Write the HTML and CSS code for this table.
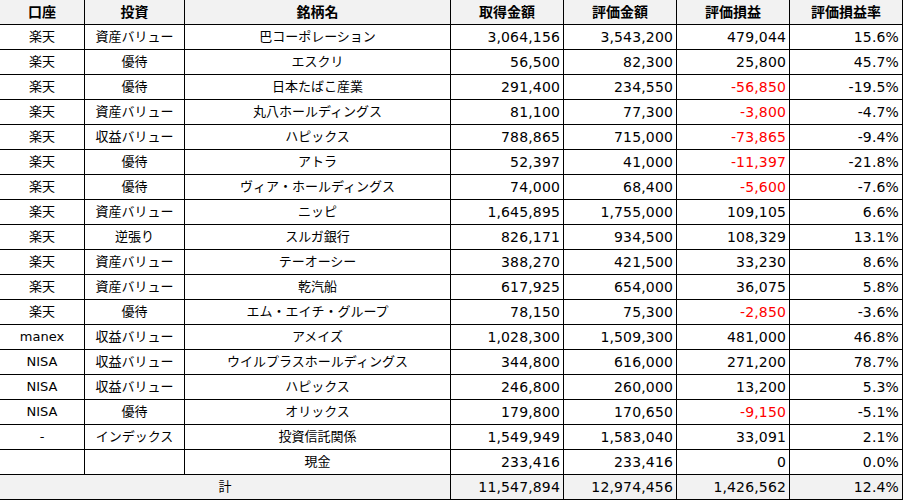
FILE: index.html
```html
<!DOCTYPE html>
<html lang="ja">
<head>
<meta charset="utf-8">
<link rel="stylesheet" href="styles.css">
</head>
<body>
<table class="sheet">
  <colgroup>
    <col class="c-acct"><col class="c-kind"><col class="c-name"><col class="c-num"><col class="c-num"><col class="c-num"><col class="c-num">
  </colgroup>
  <thead>
    <tr><th>口座</th><th>投資</th><th>銘柄名</th><th>取得金額</th><th>評価金額</th><th>評価損益</th><th>評価損益率</th></tr>
  </thead>
  <tbody>
    <tr><td class="ctr">楽天</td><td class="ctr">資産バリュー</td><td class="ctr">巴コーポレーション</td><td class="num">3,064,156</td><td class="num">3,543,200</td><td class="num">479,044</td><td class="num">15.6%</td></tr>
    <tr><td class="ctr">楽天</td><td class="ctr">優待</td><td class="ctr">エスクリ</td><td class="num">56,500</td><td class="num">82,300</td><td class="num">25,800</td><td class="num">45.7%</td></tr>
    <tr><td class="ctr">楽天</td><td class="ctr">優待</td><td class="ctr">日本たばこ産業</td><td class="num">291,400</td><td class="num">234,550</td><td class="num neg">-56,850</td><td class="num">-19.5%</td></tr>
    <tr><td class="ctr">楽天</td><td class="ctr">資産バリュー</td><td class="ctr">丸八ホールディングス</td><td class="num">81,100</td><td class="num">77,300</td><td class="num neg">-3,800</td><td class="num">-4.7%</td></tr>
    <tr><td class="ctr">楽天</td><td class="ctr">収益バリュー</td><td class="ctr">ハピックス</td><td class="num">788,865</td><td class="num">715,000</td><td class="num neg">-73,865</td><td class="num">-9.4%</td></tr>
    <tr><td class="ctr">楽天</td><td class="ctr">優待</td><td class="ctr">アトラ</td><td class="num">52,397</td><td class="num">41,000</td><td class="num neg">-11,397</td><td class="num">-21.8%</td></tr>
    <tr><td class="ctr">楽天</td><td class="ctr">優待</td><td class="ctr">ヴィア・ホールディングス</td><td class="num">74,000</td><td class="num">68,400</td><td class="num neg">-5,600</td><td class="num">-7.6%</td></tr>
    <tr><td class="ctr">楽天</td><td class="ctr">資産バリュー</td><td class="ctr">ニッピ</td><td class="num">1,645,895</td><td class="num">1,755,000</td><td class="num">109,105</td><td class="num">6.6%</td></tr>
    <tr><td class="ctr">楽天</td><td class="ctr">逆張り</td><td class="ctr">スルガ銀行</td><td class="num">826,171</td><td class="num">934,500</td><td class="num">108,329</td><td class="num">13.1%</td></tr>
    <tr><td class="ctr">楽天</td><td class="ctr">資産バリュー</td><td class="ctr">テーオーシー</td><td class="num">388,270</td><td class="num">421,500</td><td class="num">33,230</td><td class="num">8.6%</td></tr>
    <tr><td class="ctr">楽天</td><td class="ctr">資産バリュー</td><td class="ctr">乾汽船</td><td class="num">617,925</td><td class="num">654,000</td><td class="num">36,075</td><td class="num">5.8%</td></tr>
    <tr><td class="ctr">楽天</td><td class="ctr">優待</td><td class="ctr">エム・エイチ・グループ</td><td class="num">78,150</td><td class="num">75,300</td><td class="num neg">-2,850</td><td class="num">-3.6%</td></tr>
    <tr><td class="ctr">manex</td><td class="ctr">収益バリュー</td><td class="ctr">アメイズ</td><td class="num">1,028,300</td><td class="num">1,509,300</td><td class="num">481,000</td><td class="num">46.8%</td></tr>
    <tr><td class="ctr">NISA</td><td class="ctr">収益バリュー</td><td class="ctr">ウイルプラスホールディングス</td><td class="num">344,800</td><td class="num">616,000</td><td class="num">271,200</td><td class="num">78.7%</td></tr>
    <tr><td class="ctr">NISA</td><td class="ctr">収益バリュー</td><td class="ctr">ハピックス</td><td class="num">246,800</td><td class="num">260,000</td><td class="num">13,200</td><td class="num">5.3%</td></tr>
    <tr><td class="ctr">NISA</td><td class="ctr">優待</td><td class="ctr">オリックス</td><td class="num">179,800</td><td class="num">170,650</td><td class="num neg">-9,150</td><td class="num">-5.1%</td></tr>
    <tr><td class="ctr">-</td><td class="ctr">インデックス</td><td class="ctr">投資信託関係</td><td class="num">1,549,949</td><td class="num">1,583,040</td><td class="num">33,091</td><td class="num">2.1%</td></tr>
    <tr><td class="ctr"></td><td class="ctr"></td><td class="ctr">現金</td><td class="num">233,416</td><td class="num">233,416</td><td class="num">0</td><td class="num">0.0%</td></tr>
  </tbody>
  <tfoot>
    <tr><td class="ctr" colspan="3">計</td><td class="num">11,547,894</td><td class="num">12,974,456</td><td class="num">1,426,562</td><td class="num">12.4%</td></tr>
  </tfoot>
</table>
</body>
</html>
```
FILE: styles.css
```css
html, body {
  margin: 0;
  padding: 0;
  background: #ffffff;
}

body {
  font-family: "DejaVu Sans", "Noto Sans CJK JP", sans-serif;
  font-size: 13px;
  color: #000000;
}

.sheet {
  border-collapse: separate;
  border-spacing: 0;
  table-layout: fixed;
  width: 903px;
}

.c-acct { width: 85px; }
.c-kind { width: 100px; }
.c-name { width: 266px; }
.c-num  { width: 113px; }

.sheet th,
.sheet td {
  height: 25px;
  padding: 0 3px;
  border-right: 1px solid #000000;
  border-bottom: 1px solid #000000;
  white-space: nowrap;
  overflow: hidden;
  line-height: 24px;
  box-sizing: border-box;
}

.sheet th {
  background: #f2f2f2;
  font-weight: bold;
  font-size: 14px;
  text-align: center;
}

.ctr {
  text-align: center;
}

.num {
  text-align: right;
  font-size: 14px;
  letter-spacing: 0.15px;
}

.neg {
  color: #ff0000;
}

.sheet tfoot td {
  background: #f2f2f2;
}
```
